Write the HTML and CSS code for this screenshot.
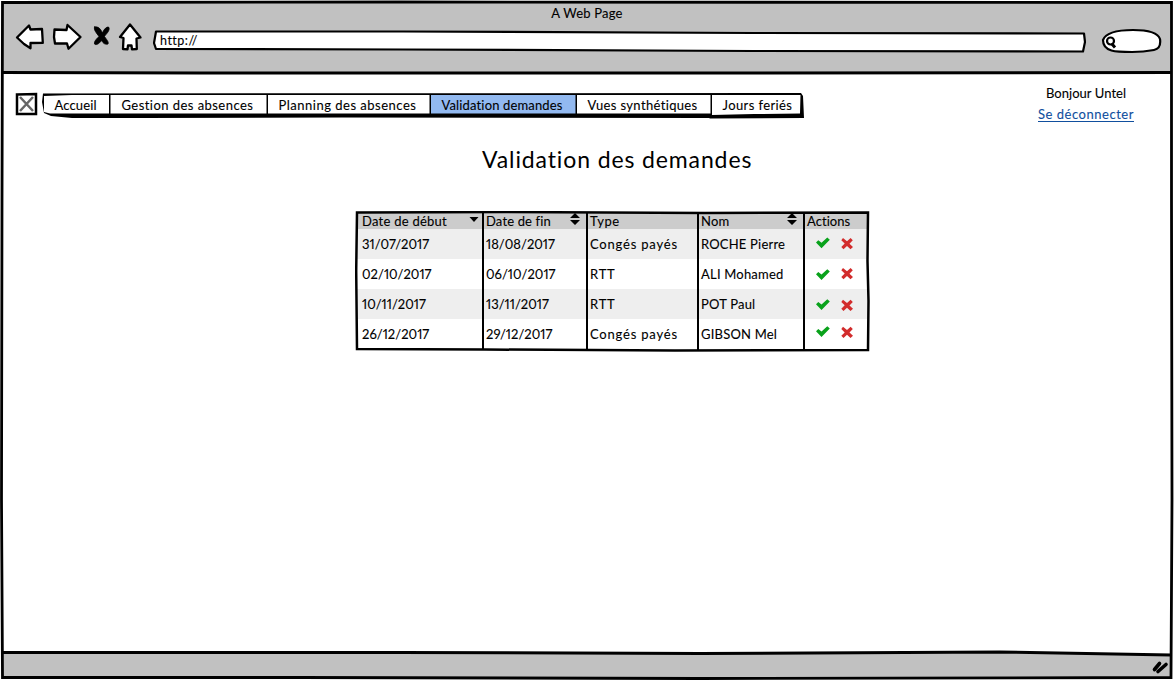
FILE: index.html
```
<!DOCTYPE html>
<html lang="fr">
<head>
<meta charset="utf-8">
<title>A Web Page</title>
<link rel="stylesheet" href="styles.css">
</head>
<body>
<div class="window">
  <header class="toolbar">
    <div class="window-title">A Web Page</div>
    <div class="controls">
      <svg class="nav-icons" width="130" height="32" viewBox="14 21 130 32" fill="#fff" stroke="#000" stroke-width="2.300" stroke-linejoin="round" stroke-linecap="round">
        <path d="M17 37.500 29 25.500 30.500 29.500 42 29 42.800 42.800 30.500 43 30.500 48.300 24 44Z"/>
        <path d="M54.500 29.500 66.500 30 67.500 25 80.500 37 68.500 48.800 67 43.500 55 43.500 54 37Z"/>
        <path d="M94.500 27C99 26 101 30 102.500 33 104 29 107 26 109 27.500 110 31 106 34 104.500 36.500 106.500 39.500 109 42 108 44 104 45 102.500 42 101.500 40.500 99 44 96 45.500 94.500 44 94 41 97 38.500 99 36.500 96.500 33 93.500 30 94.500 27Z" fill="#000" stroke="#000" stroke-width=".8"/>
        <path d="M130 24.500 120 37 123.500 38 123 49 127.500 49.300 128 45.500 131.500 45.500 132 49.300 136.800 49 136.500 38.500 140.500 37.500Z"/>
      </svg>
      <div class="address">
        <svg class="sketch" viewBox="0 0 933 24" fill="#fff" stroke="#000" stroke-linejoin="round"><path d="M3 2.500 250 2.500 600 4 931 4.500 932 13 930 22.500 600 22 250 20.500 3 20 1 14Z" stroke-width="2.200"/></svg>
        <span class="url">http://</span>
      </div>
      <svg class="search" width="62" height="28" viewBox="1100 27 62 28" fill="#fff" stroke="#000" stroke-width="2.200">
        <path d="M1103 40C1106 32 1120 30 1133 30 1148 30 1158 33 1160 39 1161 46 1159 49 1154 50 1146 51.500 1140 52 1132 52 1116 52 1103 52 1103 40Z"/>
        <circle cx="1110.500" cy="41" r="3.500"/><path d="M1112 44 1115 47.500" stroke-width="3"/>
      </svg>
    </div>
  </header>
  <main class="page">
    <div class="topline">
      <svg class="logo" width="23" height="24" viewBox="0 0 23 24" fill="none"><path d="M2 2.500 21 2 21 22 2 22Z" stroke="#000" stroke-width="2.500"/><path d="M5 5 18 19M18 5 5 19" stroke="#666" stroke-width="2.500"/></svg>
      <nav class="menu">
        <svg class="sketch" viewBox="0 0 763 27" fill="#000"><path d="M1 1.500 759 1 761 4 762 26 668 26.500 667 26 300 25.500 100 26 30 26 9 24 2 21 0 10Z"/><path d="M2 4 30 3 67 3 67 21.500 8 21.500 2 20ZM68.500 3H224.500V21.500H68.500ZM226 3H387.500V21.500H226ZM535 3H668.500V21.500H535ZM670 3H758.500L758 21.500 712 22 670 23Z" fill="#fff"/><path d="M389 3H533.500V21.500H389Z" fill="#92b9f0"/></svg>
        <a class="m1">Accueil</a><a class="m2">Gestion des absences</a><a class="m3">Planning des absences</a><a class="m4">Validation demandes</a><a class="m5">Vues synthétiques</a><a class="m6">Jours feriés</a>
      </nav>
      <div class="user"><div class="hello">Bonjour Untel</div><a class="logout">Se déconnecter</a></div>
    </div>
    <h1>Validation des demandes</h1>
    <div class="requests">
      <div class="row head"><span class="c1">Date de début<svg class="sort" width="10" height="12" viewBox="0 0 10 12"><path d="M.5 4H9.500L5 9Z"/></svg></span><span class="c2">Date de fin<svg class="sort" width="10" height="12" viewBox="0 0 10 12"><path d="M0 5 5 0 10 5ZM0 7H10L5 12Z"/></svg></span><span class="c3">Type</span><span class="c4">Nom<svg class="sort" width="10" height="12" viewBox="0 0 10 12"><path d="M0 5 5 0 10 5ZM0 7H10L5 12Z"/></svg></span><span class="c5">Actions</span></div>
      <div class="row"><span class="c1 date">31/07/2017</span><span class="c2 date">18/08/2017</span><span class="c3 type">Congés payés</span><span class="c4">ROCHE Pierre</span><span class="c5"><svg class="act" width="42" height="30" viewBox="0 0 42 30"><path class="ok" d="M3 13.500 5.300 11.300 8.500 13.800 14.300 8.500 16.800 10.800 8.500 19.300Z"/><path class="no" d="M30 9 34 12.200 37.600 9 39.800 11.200 36.500 14.700 40 18 37.500 20.200 34 17 30.500 20.200 28.300 18 31.700 14.600 28.300 11.200Z"/></svg></span></div>
      <div class="row"><span class="c1 date">02/10/2017</span><span class="c2 date">06/10/2017</span><span class="c3 type">RTT</span><span class="c4">ALI Mohamed</span><span class="c5"><svg class="act" width="42" height="30" viewBox="0 0 42 30"><path class="ok" transform="translate(0 1.700)" d="M3 13.500 5.300 11.300 8.500 13.800 14.300 8.500 16.800 10.800 8.500 19.300Z"/><path class="no" d="M30 9 34 12.200 37.600 9 39.800 11.200 36.500 14.700 40 18 37.500 20.200 34 17 30.500 20.200 28.300 18 31.700 14.600 28.300 11.200Z"/></svg></span></div>
      <div class="row"><span class="c1 date">10/11/2017</span><span class="c2 date">13/11/2017</span><span class="c3 type">RTT</span><span class="c4">POT Paul</span><span class="c5"><svg class="act" width="42" height="30" viewBox="0 0 42 30"><g transform="translate(0 1.700)"><path class="ok" d="M3 13.500 5.300 11.300 8.500 13.800 14.300 8.500 16.800 10.800 8.500 19.300Z"/><path class="no" d="M30 9 34 12.200 37.600 9 39.800 11.200 36.500 14.700 40 18 37.500 20.200 34 17 30.500 20.200 28.300 18 31.700 14.600 28.300 11.200Z"/></g></svg></span></div>
      <div class="row"><span class="c1 date">26/12/2017</span><span class="c2 date">29/12/2017</span><span class="c3 type">Congés payés</span><span class="c4">GIBSON Mel</span><span class="c5"><svg class="act" width="42" height="30" viewBox="0 0 42 30"><g transform="translate(0 -1.200)"><path class="ok" d="M3 13.500 5.300 11.300 8.500 13.800 14.300 8.500 16.800 10.800 8.500 19.300Z"/><path class="no" d="M30 9 34 12.200 37.600 9 39.800 11.200 36.500 14.700 40 18 37.500 20.200 34 17 30.500 20.200 28.300 18 31.700 14.600 28.300 11.200Z"/></g></svg></span></div>
      <svg class="sketch" viewBox="0 0 515 141" fill="none" stroke="#000" stroke-width="2.500"><path d="M2 1.500 150 1 350 2 513 1.500 512.500 50 513.500 90 513 139 320 139.500 130 138.500 2 138 1.200 60Z"/><path d="M128 2V139M232 2V139M343 2V139M449 2V139" stroke-width="2"/></svg>
    </div>
  </main>
  <footer class="statusbar"></footer>
  <svg class="frame" viewBox="0 0 1174 680" fill="none" stroke="#000" stroke-width="3">
    <path d="M3 655 V652.500 L400 652.500 700 653.500 1000 652 1171 655V678H3Z" fill="#c1c1c1" stroke="none"/>
    <path d="M3 72.500 200 73 700 73 1172 72.500M3 652.500 400 652.500 700 653.500 1000 652 1171 655"/>
    <path d="M2.500 2.500 400 2 1171.500 2.500 1171.500 200 1172 500 1171 677.500 700 678.500 300 677.500 2.500 677.500 1.500 500 2 200Z" stroke-width="2.800"/>
    <path d="M1154.500 669.500 1159.500 663.500M1158 671.500 1166 664.500" stroke-width="3.600" stroke-linecap="round"/>
  </svg>
</div>
</body>
</html>
```
FILE: styles.css
```
* { box-sizing: border-box; }
body { margin: 0; background: #fff; color: #000; font: 13px/16px Lato, "Open Sans", sans-serif; letter-spacing: .6px; -webkit-text-stroke: .1px currentColor; }
.window { position: relative; width: 1174px; height: 680px; padding: 2px; display: grid; grid-template-rows: 72px 1fr 26px; overflow: hidden; }
.frame, .sketch { position: absolute; inset: 0; width: 100%; height: 100%; pointer-events: none; }
.toolbar { background: #c1c1c1; }
.window-title { height: 25px; padding-top: 3px; text-align: center; letter-spacing: .2px; }
.controls { display: flex; align-items: flex-start; padding-left: 12px; }
.nav-icons { margin-top: -6px; margin-right: 9px; }
.address { position: relative; width: 933px; height: 24px; margin: 2px 14px 0 0; padding: 3px 0 0 7px; }
.url { position: relative; font-size: 12.500px; letter-spacing: .5px; }
.topline { display: flex; padding: 18px 0 0 14px; height: 66px; }
.logo { margin: 0 4px 0 -1px; }
.menu { position: relative; display: flex; width: 763px; height: 27px; }
.menu a { position: relative; padding: 5px 0 0 12.500px; white-space: nowrap; }
.menu .m1 { width: 67px; letter-spacing: .15px; }
.menu .m2 { width: 157px; letter-spacing: .45px; }
.menu .m3 { width: 163px; letter-spacing: .5px; }
.menu .m4 { width: 146px; letter-spacing: .15px; }
.menu .m5 { width: 135px; letter-spacing: .35px; }
.menu .m6 { width: 93px; letter-spacing: .4px; }
.user { width: 110px; margin-left: 226px; text-align: center; white-space: nowrap; }
.hello { margin-top: -7px; letter-spacing: .05px; }
.logout { display: inline-block; margin-top: 5px; height: 16px; letter-spacing: .52px; color: #114f9e; border-bottom: 1px solid #114f9e; }
h1 { margin: 5px 0 0 480px; font-size: 23px; line-height: 28px; font-weight: 400; letter-spacing: .88px; -webkit-text-stroke: 0; }
.requests { position: relative; width: 515px; height: 141px; margin: 38px 0 0 353px; padding: 2px 2px 0; }
.row { display: flex; height: 30px; line-height: 30px; background: #fff; white-space: nowrap; }
.row:nth-child(even) { background: #eee; }
.row.head { height: 16px; line-height: 17px; background: #ccc; }
.row span { display: flex; padding-left: 3px; }
.row .c1 { width: 126px; padding-left: 5px; }
.c2 { width: 104px; }
.c3 { width: 111px; }
.c4 { width: 106px; letter-spacing: .2px; }
.c5 { width: 64px; letter-spacing: .05px; }
.head .c1 { letter-spacing: .25px; }
.head .c2 { letter-spacing: .15px; }
.date { font-variant-numeric: proportional-nums; letter-spacing: .03px; }
.type { letter-spacing: .8px; }
.sort { margin: 0 7px 0 auto; }
.c1 .sort { margin-right: 4px; }
.ok { fill: #09a21b; }
.no { fill: #d22c2c; }
.act { margin-left: 6px; }
```
